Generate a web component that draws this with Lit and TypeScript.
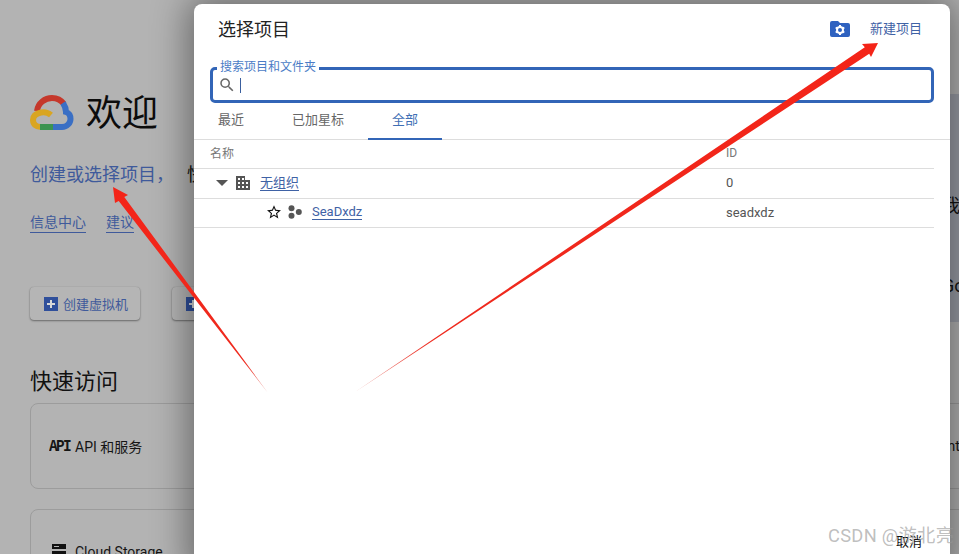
import { LitElement, html, css, svg } from "lit";
import { customElement } from "lit/decorators.js";

@customElement("app-root")
export class AppRoot extends LitElement {
  static styles = css`
    :host {
      display: block;
      position: relative;
      width: 959px;
      height: 554px;
      overflow: hidden;
      background: #b3b3b3;
      font-family: Roboto, "Noto Sans CJK SC", sans-serif;
      color: #111;
    }
    /* dimmed page behind the dialog */
    .page {
      width: 1400px;
      padding: 94px 0 0 30px;
      box-sizing: border-box;
      height: 554px;
      overflow: hidden;
    }
    .hero { display: flex; height: 227px; }
    .hero-main { width: 880px; }
    .welcome { display: flex; align-items: center; gap: 12px; height: 38px; }
    .welcome h1 { margin: 2px 0 0; font-size: 36px; font-weight: 400; line-height: 38px; color: #0c0c0c; }
    .lead { margin-top: 31px; font-size: 18px; line-height: 24px; color: #3f5a9b; display: flex; gap: 13px; }
    .lead span + span { color: #111; }
    .links { display: flex; gap: 20px; margin-top: 26px; font-size: 14px; line-height: 18px; color: #3f5a9b; }
    .links span { border-bottom: 1px solid #3f5a9b; padding-bottom: 1px; }
    .btns { display: flex; gap: 32px; margin-top: 54px; }
    .btn {
      display: flex; align-items: center; gap: 5px;
      width: 110px; height: 33px; box-sizing: border-box; padding-left: 14px;
      border-radius: 4px; background: #b5b5b5;
      box-shadow: 0 1px 2px rgba(0,0,0,.4), 0 0 1px rgba(0,0,0,.2);
      font-size: 13px; color: #3f5a9b;
    }
    .side {
      width: 300px; height: 228px;
      background: #9a9da6;
      padding: 97px 0 0 32px; box-sizing: border-box;
      font-size: 18px; color: #111;
      display: flex; flex-direction: column; gap: 58px;
    }
    h2 { margin: 47px 0 7px; font-size: 22px; font-weight: 400; line-height: 28px; color: #111; }
    .cards { display: grid; grid-template-columns: 880px 440px; row-gap: 20px; column-gap: 20px; }
    .card {
      height: 86px; box-sizing: border-box;
      border: 1px solid #9c9c9c; border-radius: 8px;
      display: flex; align-items: center; gap: 6px; padding: 0 0 0 18px;
      font-size: 14px; color: #151515;
    }
    .far { padding-left: 0; }
    .api {
      font-family: "Liberation Mono", monospace; font-weight: 700; font-size: 17px;
      letter-spacing: -2px; width: 20px; transform: scaleX(.85); transform-origin: left center;
    }
    .store { align-items: flex-start; padding-top: 34px; gap: 8px; }
    .store svg { margin-left: 2px; }

    /* dialog */
    .dialog {
      position: absolute; left: 194px; top: 4px;
      width: 756px; height: 570px; box-sizing: border-box;
      background: #fff; border-radius: 8px;
      box-shadow: 0 0 36px 6px rgba(0,0,0,.42);
      display: flex; flex-direction: column;
    }
    .head { display: flex; align-items: center; height: 50px; padding: 0 28px 0 24px; }
    .head h3 { margin: 0 0 2px; flex: 1; font-size: 18px; font-weight: 400; color: #222; }
    .new { font-size: 13px; color: #3f62a5; margin: 0 0 4px 20px; }
    .search { margin: 13px 16px 0 16px; height: 36px; box-sizing: border-box; border: 3px solid #3265b7; border-radius: 5px; position: relative; display: flex; align-items: center; padding-left: 5px; gap: 4px; }
    .search label { position: absolute; left: 4px; top: -10px; padding: 0 3px; background: #fff; font-size: 12px; line-height: 14px; color: #4b7cc6; }
    .caret { width: 1px; height: 15px; background: #3a5f9e; margin-top: 1px; }
    .tabs { display: flex; height: 37px; border-bottom: 1px solid #ddd; box-sizing: border-box; }
    .tab { padding: 0 24px; font-size: 13px; line-height: 34px; color: #666; position: relative; }
    .tab.on { color: #3f6fb5; }
    .tab.on::after { content: ""; position: absolute; left: 0; right: 0; bottom: -1px; height: 2px; background: #3265b7; }
    .row {
      display: grid; grid-template-columns: 532px 1fr; align-items: center;
      margin-right: 16px; border-bottom: 1px solid #ddd; box-sizing: border-box;
      font-size: 13px; color: #555; padding-bottom: 2px;
    }
    .row.th { height: 29px; font-size: 12px; color: #777; padding-bottom: 3px; }
    .row.r1 { height: 30px; }
    .row.r2 { height: 29px; }
    .name { display: flex; align-items: center; }
    .th .name { padding-left: 16px; }
    .r1 .name { padding-left: 22px; gap: 8px; }
    .r2 .name { padding-left: 73px; gap: 6px; }
    .lnk { color: #3f62a5; border-bottom: 1px solid #3f62a5; line-height: 15px; margin-left: 2px; }
    .r2 .lnk { margin-left: 4px; }
    .foot { position: absolute; left: 702px; top: 527px; font-size: 13px; color: #111; }

    .arrows { position: absolute; left: 0; top: 0; pointer-events: none; }
    .mark {
      position: absolute; left: 828px; top: 525px;
      font-size: 18.300px; line-height: 22px; color: rgba(150,150,150,.62);
      letter-spacing: .3px;
    }
    svg { display: block; flex: none; }
  `;

  private logo() {
    return html`<svg width="44" height="36" viewBox="0 0 44 36" fill="none" stroke-width="6">
      <path d="M7 16C8 8 15 3 22 3C27 3 31 5 34 9" stroke="#c5382b"/>
      <path d="M33 8C35 11 36 14 36 17C39 18 40.500 21 40.500 24C40.500 28 37 32 32 32L22 32" stroke="#3a6fc4"/>
      <path d="M21 20C18 17.500 15 16.500 11 17.500C6 18.500 3 21 3 25C3 29 6 32 11 32" stroke="#d9a521"/>
      <path d="M10 32L23 32" stroke="#3c9350"/>
    </svg>`;
  }

  private plus() {
    return html`<svg width="14" height="14" viewBox="0 0 14 14"><rect width="14" height="14" fill="#2f4f9b"/><path d="M6 3h2v3h3v2H8v3H6V8H3V6h3z" fill="#d8d8d8"/></svg>`;
  }

  render() {
    return html`
      <div class="page">
        <div class="hero">
          <div class="hero-main">
            <div class="welcome">${this.logo()}<h1>欢迎</h1></div>
            <div class="lead"><span>创建或选择项目，</span><span>快速开始使用</span></div>
            <div class="links"><span>信息中心</span><span>建议</span></div>
            <div class="btns">
              <div class="btn">${this.plus()}创建虚拟机</div>
              <div class="btn">${this.plus()}运行查询</div>
            </div>
          </div>
          <div class="side"><span>我</span><span>Go</span></div>
        </div>
        <h2>快速访问</h2>
        <div class="cards">
          <div class="card"><span class="api">API</span>API 和服务</div>
          <div class="card far"><span>Center</span></div>
          <div class="card store">
            <svg width="16" height="22" viewBox="0 0 16 22"><path d="M1 0h14v5H1zM1 7h14v5H1z" fill="#111"/><rect x="3" y="2" width="5" height="1" fill="#b3b3b3"/></svg>
            <span>Cloud Storage</span>
          </div>
          <div class="card far store"><span>Ie</span></div>
        </div>
      </div>

      <div class="dialog">
        <div class="head">
          <h3>选择项目</h3>
          <svg width="20" height="16" viewBox="0 0 20 16">
            <path d="M2 0h6l2 2h8a2 2 0 0 1 2 2v10a2 2 0 0 1-2 2H2a2 2 0 0 1-2-2V2a2 2 0 0 1 2-2z" fill="#2f62c0"/>
            <circle cx="10" cy="9" r="3" fill="none" stroke="#fff" stroke-width="2"/>
            <path d="M10 4v2M10 12v2M5.700 6.500l1.700 1M12.600 10.500l1.700 1M5.700 11.500l1.700-1M12.600 7.500l1.700-1" stroke="#fff" stroke-width="2"/>
          </svg>
          <span class="new">新建项目</span>
        </div>
        <div class="search">
          <label>搜索项目和文件夹</label>
          <svg width="18" height="18" viewBox="0 0 24 24"><path fill="#666" d="M15.500 14h-.79l-.28-.27A6.470 6.470 0 0 0 16 9.500 6.500 6.500 0 1 0 9.500 16c1.610 0 3.090-.59 4.230-1.570l.27.28v.79l5 4.990L20.490 19l-4.990-5zm-6 0C7.010 14 5 11.990 5 9.500S7.010 5 9.500 5 14 7.010 14 9.500 11.990 14 9.500 14z"/></svg>
          <span class="caret"></span>
        </div>
        <div class="tabs">
          <div class="tab">最近</div>
          <div class="tab">已加星标</div>
          <div class="tab on">全部</div>
        </div>
        <div class="row th"><div class="name">名称</div><div>ID</div></div>
        <div class="row r1">
          <div class="name">
            <svg width="12" height="6" viewBox="0 0 12 6"><path d="M0 0h12L6 6z" fill="#555"/></svg>
            <svg width="14" height="14" viewBox="0 0 14 14"><path fill="#555" fill-rule="evenodd" d="M0 0h9v4h5v10H0zM2 2v2h2V2zM6 2v2h2V2zM2 6v2h2V6zM6 6v2h2V6zM10 6v2h2V6zM2 10v2h2v-2zM6 10v2h2v-2zM10 10v2h2v-2z"/></svg>
            <span class="lnk">无组织</span>
          </div>
          <div>0</div>
        </div>
        <div class="row r2">
          <div class="name">
            <svg width="14" height="14" viewBox="2 2 20 19.500"><path fill="#111" d="M22 9.240l-7.190-.62L12 2 9.190 8.630 2 9.240l5.460 4.730L5.820 21 12 17.270 18.180 21l-1.630-7.030L22 9.240zM12 15.400l-3.760 2.270 1-4.280-3.320-2.880 4.380-.38L12 6.100l1.710 4.040 4.380.38-3.320 2.880 1 4.280L12 15.400z"/></svg>
            <svg width="14" height="14" viewBox="0 0 14 14" style="margin-left:1px"><circle cx="3.500" cy="3.300" r="3" fill="#555"/><circle cx="3.500" cy="10.700" r="3" fill="#555"/><circle cx="10.800" cy="7" r="3" fill="#555"/></svg>
            <span class="lnk">SeaDxdz</span>
          </div>
          <div>seadxdz</div>
        </div>
        <div class="foot">取消</div>
      </div>

      <svg class="arrows" width="959" height="554" viewBox="0 0 959 554">
        <defs>
          <linearGradient id="a1" gradientUnits="userSpaceOnUse" x1="113" y1="187" x2="268" y2="393">
            <stop offset="0" stop-color="#f42418"/><stop offset=".85" stop-color="#ee2a1e"/><stop offset="1" stop-color="#e8908a"/>
          </linearGradient>
          <linearGradient id="a2" gradientUnits="userSpaceOnUse" x1="878" y1="43" x2="355" y2="392">
            <stop offset="0" stop-color="#f42418"/><stop offset=".85" stop-color="#ee2a1e"/><stop offset="1" stop-color="#e8908a"/>
          </linearGradient>
        </defs>
        ${svg`<polygon fill="url(#a1)" points="113,187 128,195 124.300,196.900 268,393 118.700,201.100 115,203"/>`}
        ${svg`<polygon fill="url(#a2)" points="878,43 871,57 869.200,53.800 355,392 864.800,47.200 862,44"/>`}
      </svg>
      <div class="mark">CSDN @游北亮</div>
    `;
  }
}
